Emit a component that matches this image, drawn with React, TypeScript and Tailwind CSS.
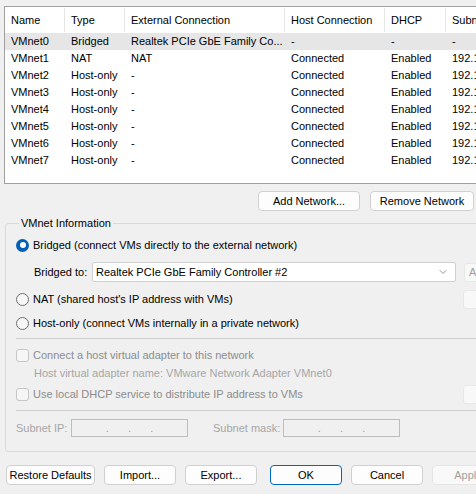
import { ChevronDown } from 'lucide-react';

// Virtual network editor dialog: network list + VMnet information panel
const networks = [
  { name: 'VMnet0', type: 'Bridged', ext: 'Realtek PCIe GbE Family Co...', host: '-', dhcp: '-', subnet: '-' },
  { name: 'VMnet1', type: 'NAT', ext: 'NAT', host: 'Connected', dhcp: 'Enabled', subnet: '192.168.1.0' },
  { name: 'VMnet2', type: 'Host-only', ext: '-', host: 'Connected', dhcp: 'Enabled', subnet: '192.168.2.0' },
  { name: 'VMnet3', type: 'Host-only', ext: '-', host: 'Connected', dhcp: 'Enabled', subnet: '192.168.3.0' },
  { name: 'VMnet4', type: 'Host-only', ext: '-', host: 'Connected', dhcp: 'Enabled', subnet: '192.168.4.0' },
  { name: 'VMnet5', type: 'Host-only', ext: '-', host: 'Connected', dhcp: 'Enabled', subnet: '192.168.5.0' },
  { name: 'VMnet6', type: 'Host-only', ext: '-', host: 'Connected', dhcp: 'Enabled', subnet: '192.168.6.0' },
  { name: 'VMnet7', type: 'Host-only', ext: '-', host: 'Connected', dhcp: 'Enabled', subnet: '192.168.7.0' },
];

const cols = 'grid grid-cols-[60px_60px_160px_100px_61px_120px]';

const Button = ({ label, className = '', disabled = false, primary = false }) => (
  <button
    className={`shrink-0 h-[20px] rounded-[4px] border whitespace-nowrap text-[11px] leading-none ${
      primary ? 'border-[#0067c0] bg-[#fdfdfd]' : disabled ? 'border-[#e5e5e5] bg-[#f9f9f9]' : 'border-[#d0d0d0] bg-[#fdfdfd]'
    } ${disabled ? 'text-[#a0a0a0]' : 'text-black'} ${className}`}
  >
    {label}
  </button>
);

const Radio = ({ checked = false }) =>
  checked ? (
    <span className="w-[13px] h-[13px] rounded-full bg-[#005fb8] flex items-center justify-center shrink-0">
      <span className="w-[6px] h-[6px] rounded-full bg-white" />
    </span>
  ) : (
    <span className="w-[13px] h-[13px] rounded-full border border-[#707070] bg-[#f7f7f7] shrink-0" />
  );

const Checkbox = () => (
  <span className="w-[13px] h-[13px] rounded-[3px] border border-[#c6c6c6] bg-[#f6f6f6] shrink-0" />
);

const IpBox = () => (
  <div className="shrink-0 h-[18px] w-[117px] border border-[#bdbdbd] bg-[#f0f0f0] flex items-center justify-around px-[24px] text-[#a0a0a0] leading-none">
    <span>.</span>
    <span>.</span>
    <span>.</span>
  </div>
);

const SideButton = ({ label = '' }) => (
  <div className="shrink-0 w-[40px] h-[19px] rounded-[3px] border border-[#e8e8e8] bg-[#f8f8f8] text-[#a0a0a0] flex items-center pl-[4px] whitespace-nowrap overflow-hidden">
    {label}
  </div>
);

export default function App() {
  return (
    <div
      className="w-[476px] h-[494px] overflow-hidden bg-[#f0f0f0] text-[11px] text-black"
      style={{ fontFamily: '"Liberation Sans", Arial, sans-serif' }}
    >
      {/* network list */}
      <div className="ml-[4px] mt-[6px] w-[520px] h-[178px] border border-[#a0a0a0] bg-white">
        <div className={`${cols} h-[26px] items-center`}>
          {['Name', 'Type', 'External Connection', 'Host Connection', 'DHCP', 'Subnet Address'].map((h) => (
            <div key={h} className="h-[24px] flex items-center pl-[6px] border-r border-[#e5e5e5] whitespace-nowrap overflow-hidden">
              {h}
            </div>
          ))}
        </div>
        {networks.map((n, i) => (
          <div key={n.name} className={`${cols} h-[17px] items-center ${i === 0 ? 'bg-[#e6e6e6]' : ''}`}>
            {[n.name, n.type, n.ext, n.host, n.dhcp, n.subnet].map((v, j) => (
              <div key={j} className="pl-[6px] whitespace-nowrap overflow-hidden">
                {v}
              </div>
            ))}
          </div>
        ))}
      </div>

      <div className="flex mt-[7px] ml-[258px] gap-[10px]">
        <Button label="Add Network..." className="w-[102px]" />
        <Button label="Remove Network" className="w-[104px]" />
      </div>

      {/* VMnet information group */}
      <fieldset className="ml-[5px] mt-[7px] w-[520px] h-[234px] border border-[#dadada] rounded-[3px] pl-[10px]">
        <legend className="ml-[3px] px-[2px] leading-none">VMnet Information</legend>

        <div className="flex items-center gap-[4px] mt-[8px] h-[16px]">
          <Radio checked />
          <span className="whitespace-nowrap">Bridged (connect VMs directly to the external network)</span>
        </div>

        <div className="flex items-center mt-[9px] ml-[18px] h-[20px]">
          <span className="w-[58px] shrink-0 whitespace-nowrap">Bridged to:</span>
          <div className="shrink-0 w-[364px] h-[20px] border border-[#d0d0d0] rounded-[2px] bg-white flex items-center pl-[3px] pr-[6px]">
            <span className="flex-1 whitespace-nowrap">Realtek PCIe GbE Family Controller #2</span>
            <ChevronDown size={12} strokeWidth={1.2} className="text-[#505050]" />
          </div>
          <div className="ml-[8px]">
            <SideButton label="Automatic" />
          </div>
        </div>

        <div className="flex items-center h-[20px] mt-[7px]">
          <div className="flex items-center gap-[4px] w-[447px] shrink-0">
            <Radio />
            <span className="whitespace-nowrap">NAT (shared host's IP address with VMs)</span>
          </div>
          <SideButton />
        </div>

        <div className="flex items-center gap-[4px] h-[16px] mt-[6px]">
          <Radio />
          <span className="whitespace-nowrap">Host-only (connect VMs internally in a private network)</span>
        </div>

        <div className="h-px bg-[#cfcfcf] mt-[7px]" />

        <div className="flex items-center gap-[4px] h-[16px] mt-[8px] text-[#8c8c8c]">
          <Checkbox />
          <span className="whitespace-nowrap">Connect a host virtual adapter to this network</span>
        </div>
        <div className="ml-[18px] mt-[2px] h-[16px] flex items-center text-[#a6a6a6] whitespace-nowrap">
          Host virtual adapter name: VMware Network Adapter VMnet0
        </div>

        <div className="flex items-center h-[20px] mt-[3px]">
          <div className="flex items-center gap-[4px] w-[447px] shrink-0 text-[#8c8c8c]">
            <Checkbox />
            <span className="whitespace-nowrap">Use local DHCP service to distribute IP address to VMs</span>
          </div>
          <SideButton />
        </div>

        <div className="h-px bg-[#cfcfcf] mt-[6px]" />

        <div className="flex items-center h-[18px] mt-[8px] text-[#a6a6a6] whitespace-nowrap">
          <span className="w-[55px] shrink-0">Subnet IP:</span>
          <IpBox />
          <span className="ml-[25px] w-[70px] shrink-0">Subnet mask:</span>
          <IpBox />
        </div>
      </fieldset>

      {/* dialog buttons */}
      <div className="flex mt-[13px] ml-[6px] items-center">
        <Button label="Restore Defaults" className="w-[89px]" />
        <Button label="Import..." className="w-[72px] ml-[9px]" />
        <Button label="Export..." className="w-[72px] ml-[9px]" />
        <Button label="OK" primary className="w-[72px] ml-[13px]" />
        <Button label="Cancel" className="w-[72px] ml-[9px]" />
        <Button label="Apply" disabled className="w-[72px] ml-[9px]" />
      </div>
    </div>
  );
}
